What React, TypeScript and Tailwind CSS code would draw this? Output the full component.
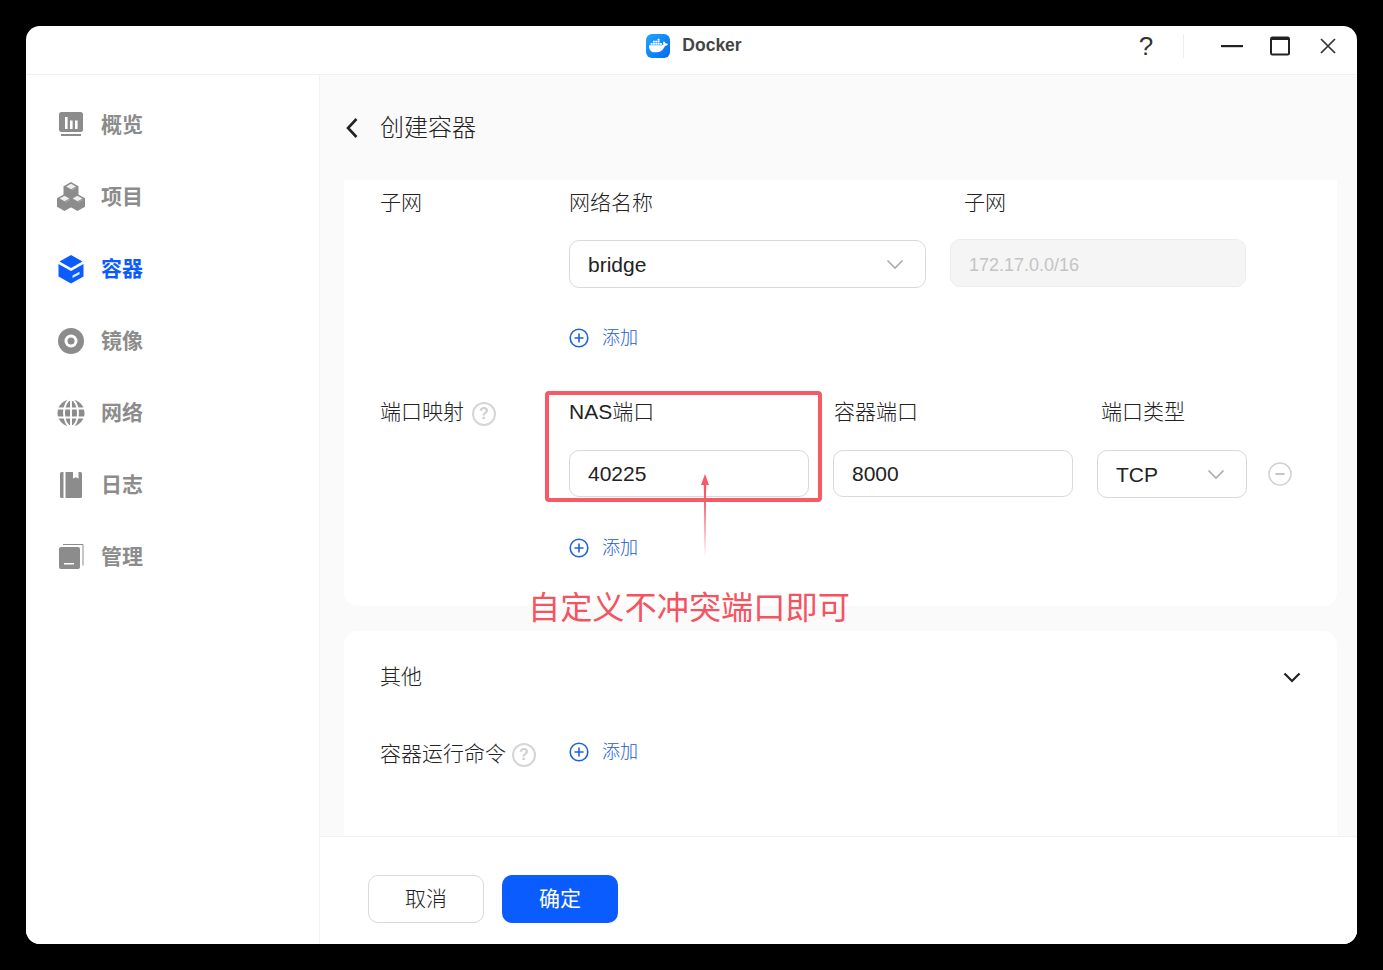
import React from "react";
import { SiDocker } from "react-icons/si";

const FONT = "[font-family:'Liberation_Sans','Noto_Sans_CJK_SC',sans-serif]";

function Overview() {
  return (
    <svg width="28" height="28" viewBox="0 0 28 28">
      <rect x="2" y="1" width="24" height="20" rx="2.500" fill="#8c8c8c" />
      <rect x="8" y="6" width="2.600" height="12" fill="#fff" />
      <rect x="13" y="9.500" width="2.600" height="8.500" fill="#fff" />
      <rect x="18" y="9.500" width="2.600" height="8.500" fill="#fff" />
      <rect x="4" y="23" width="20" height="2" fill="#8c8c8c" />
    </svg>
  );
}
function Cube({ x, y }: { x: number; y: number }) {
  return (
    <g transform={`translate(${x} ${y})`}>
      <path d="M7.500 0L15 4.200v8.600L7.500 17 0 12.800V4.200z" fill="#8c8c8c" />
      <path d="M2.600 4.500L7.500 1.800l4.900 2.700-4.900 2.700z" fill="#fff" opacity="0.85" />
      <path d="M8 8.200l4.800-2.600" stroke="#fff" strokeWidth="0.600" opacity="0.5" />
    </g>
  );
}
function Cubes() {
  return (
    <svg width="28" height="30" viewBox="0 0 28 30">
      <Cube x={6.500} y={0} />
      <Cube x={0} y={12} />
      <Cube x={13} y={12} />
    </svg>
  );
}
function Box() {
  return (
    <svg width="28" height="30" viewBox="0 0 28 30">
      <path d="M14 1l11.500 6.500L14 14 2.500 7.500z" fill="#0a5cff" />
      <path d="M1.500 10L14 17l12.500-7v12.500L14 29.500 1.500 22.500z" fill="#0a5cff" />
      <path d="M15.500 24l7-3.800v-2.400l-7 3.800z" fill="#fff" opacity="0.9" />
    </svg>
  );
}
function Disc() {
  return (
    <svg width="28" height="28" viewBox="0 0 28 28">
      <circle cx="14" cy="14" r="13" fill="#8c8c8c" />
      <circle cx="14" cy="14" r="6.500" fill="#fff" />
      <circle cx="14" cy="14" r="3.500" fill="#8c8c8c" />
    </svg>
  );
}
function Globe() {
  return (
    <svg width="28" height="28" viewBox="0 0 28 28">
      <circle cx="14" cy="14" r="13.500" fill="#8c8c8c" />
      <g fill="none" stroke="#fff" strokeWidth="1.900">
        <ellipse cx="14" cy="14" rx="7" ry="13.500" />
        <path d="M1 9.500h26M1 18.500h26M14 0v28" />
      </g>
    </svg>
  );
}
function Book() {
  return (
    <svg width="28" height="28" viewBox="0 0 28 28">
      <rect x="3" y="1" width="22" height="26" rx="1.500" fill="#8c8c8c" />
      <rect x="6.500" y="1" width="2" height="26" fill="#fff" />
      <path d="M16 1h5.500v6.500l-2.750-1.300L16 7.500z" fill="#fff" />
    </svg>
  );
}
function Manage() {
  return (
    <svg width="28" height="28" viewBox="0 0 28 28">
      <rect x="2" y="4" width="21" height="22" rx="2" fill="#8c8c8c" />
      <rect x="7" y="20" width="10" height="1.500" fill="#fff" />
      <path d="M6 1.500h20v21" fill="none" stroke="#8c8c8c" strokeWidth="1" />
    </svg>
  );
}

const NAV: { label: string; icon: React.ReactNode; active?: boolean }[] = [
  { label: "概览", icon: <Overview /> },
  { label: "项目", icon: <Cubes /> },
  { label: "容器", icon: <Box />, active: true },
  { label: "镜像", icon: <Disc /> },
  { label: "网络", icon: <Globe /> },
  { label: "日志", icon: <Book /> },
  { label: "管理", icon: <Manage /> },
];

function Chevron({ color = "#ababab", sw = 1.6 }: { color?: string; sw?: number }) {
  return (
    <svg width="18" height="11" viewBox="0 0 18 11">
      <path d="M1.500 1.500L9 9l7.500-7.500" fill="none" stroke={color} strokeWidth={sw} />
    </svg>
  );
}

function Help() {
  return (
    <span className="flex h-6 w-6 shrink-0 items-center justify-center rounded-full border-2 border-[#d6d6d6] text-[16px] font-bold leading-none text-[#cfcfcf]">
      ?
    </span>
  );
}

function Add() {
  return (
    <div className="flex h-6 items-center gap-[13px] text-[18px] text-[#2a6ad9]">
      <svg width="20" height="20" viewBox="0 0 20 20">
        <circle cx="10" cy="10" r="8.800" fill="none" stroke="#1f62d9" strokeWidth="1.600" />
        <path d="M10 5.500v9M5.500 10h9" stroke="#1f62d9" strokeWidth="1.600" />
      </svg>
      <span className="font-light text-[#1a5ad2]">添加</span>
    </div>
  );
}

function Label({ children, className = "" }: { children: React.ReactNode; className?: string }) {
  return <div className={`h-[30px] text-[21px] font-light leading-[30px] text-[#222] ${className}`}>{children}</div>;
}

function Field({ children, className = "" }: { children: React.ReactNode; className?: string }) {
  return (
    <div className={`flex items-center justify-between rounded-[10px] border border-[#d9d9d9] bg-white pl-[18px] pt-px text-[21px] text-[#222] ${className}`}>
      {children}
    </div>
  );
}

export default function App() {
  return (
    <div className={`h-[970px] w-[1383px] overflow-hidden bg-black pl-[26px] pt-[26px] ${FONT}`}>
      <div className="relative flex h-[918px] w-[1331px] flex-col overflow-hidden rounded-[14px] bg-white">
        <header className="grid h-[49px] shrink-0 grid-cols-[1fr_auto_1fr] items-center border-b border-[#f0f0f0] pb-[9px]">
          <div />
          <div className="ml-[5px] flex items-center gap-3">
            <div className="flex h-6 w-6 items-center justify-center rounded-[6px] bg-gradient-to-br from-[#22a6ff] to-[#0a68ef]">
              <SiDocker size={19} color="#fff" />
            </div>
            <span className="text-[17.5px] font-bold text-[#444]">Docker</span>
          </div>
          <div className="flex items-center justify-end">
            <span className="w-[18px] text-center text-[26px] leading-none text-[#333]">?</span>
            <div className="ml-[28px] h-6 w-px bg-[#eeeeee]" />
            <svg className="ml-[37px]" width="22" height="4" viewBox="0 0 22 4">
              <rect y="1" width="22" height="2.200" fill="#222" />
            </svg>
            <svg className="ml-[27px]" width="20" height="20" viewBox="0 0 20 20">
              <rect x="1" y="1.500" width="18" height="17" rx="1.500" fill="none" stroke="#222" strokeWidth="2" />
              <rect x="1" y="1" width="18" height="3" fill="#222" />
            </svg>
            <svg className="ml-[30px] mr-[21px]" width="16" height="16" viewBox="0 0 16 16">
              <path d="M1 1l14 14M15 1L1 15" stroke="#333" strokeWidth="1.700" />
            </svg>
          </div>
        </header>

        <div className="flex min-h-0 flex-1">
          <aside className="w-[294px] shrink-0 border-r border-[#f2f2f2] bg-white pt-[14px]">
            {NAV.map((n) => (
              <div key={n.label} className="flex h-[72px] items-center gap-4 pl-[31px]">
                <div className="flex h-[30px] w-[28px] items-center justify-center">{n.icon}</div>
                <span className={`text-[21px] font-bold ${n.active ? "text-[#0a5cff]" : "text-[#8c8c8c]"}`}>{n.label}</span>
              </div>
            ))}
          </aside>

          <main className="flex min-w-0 flex-1 flex-col bg-[#fafafa]">
            <div className="flex h-[105px] shrink-0 items-center gap-[22px] pl-[26px]">
              <svg width="12" height="20" viewBox="0 0 12 20">
                <path d="M10.500 1L2 10l8.500 9" fill="none" stroke="#222" strokeWidth="2.600" />
              </svg>
              <h1 className="text-[24px] font-light text-[#222]">创建容器</h1>
            </div>

            <div className="min-h-0 flex-1 overflow-hidden pl-6 pr-5">
              <section className="h-[426px] rounded-b-[14px] bg-white pl-9 pt-2">
                <div className="flex">
                  <Label className="w-[189px]">子网</Label>
                  <div>
                    <div className="flex">
                      <Label className="w-[395px]">网络名称</Label>
                      <Label>子网</Label>
                    </div>
                    <div className="mt-[22px] flex items-start gap-6">
                      <Field className="h-12 w-[357px] pr-[21px]">
                        <span>bridge</span>
                        <Chevron />
                      </Field>
                      <div className="-mt-px flex h-12 w-[296px] items-center rounded-[10px] border border-[#ececec] bg-[#f5f5f5] pl-[18px] pt-[5px] text-[18px] text-[#c4c4c4]">
                        172.17.0.0/16
                      </div>
                    </div>
                    <div className="mt-[38px]">
                      <Add />
                    </div>
                  </div>
                </div>

                <div className="mt-[47px] flex">
                  <div className="flex w-[189px] items-start gap-2">
                    <Label>端口映射</Label>
                    <div className="mt-[5px]">
                      <Help />
                    </div>
                  </div>
                  <div>
                    <div className="flex">
                      <Label className="w-[265px]">NAS端口</Label>
                      <Label className="w-[267px]">容器端口</Label>
                      <Label>端口类型</Label>
                    </div>
                    <div className="mt-[23px] flex items-start">
                      <Field className="h-[47px] w-[240px]">
                        <span>40225</span>
                      </Field>
                      <Field className="ml-6 h-[47px] w-[240px]">
                        <span>8000</span>
                      </Field>
                      <Field className="ml-6 h-12 w-[150px] pr-[21px]">
                        <span>TCP</span>
                        <Chevron />
                      </Field>
                      <svg className="ml-[21px] mt-3" width="24" height="24" viewBox="0 0 24 24">
                        <circle cx="12" cy="12" r="11" fill="none" stroke="#d2d2d2" strokeWidth="1.500" />
                        <path d="M7.500 12h9" stroke="#c4c4c4" strokeWidth="2" />
                      </svg>
                    </div>
                    <div className="mt-[38px]">
                      <Add />
                    </div>
                  </div>
                </div>
              </section>

              <section className="mt-[25px] h-[260px] rounded-t-[14px] bg-white pl-9 pr-[36px] pt-[31px]">
                <div className="flex items-center justify-between">
                  <Label>其他</Label>
                  <Chevron color="#222" sw={2.200} />
                </div>
                <div className="mt-[47px] flex items-start">
                  <div className="flex w-[189px] items-start gap-[6px]">
                    <Label>容器运行命令</Label>
                    <div className="mt-[4px]">
                      <Help />
                    </div>
                  </div>
                  <div className="mt-px">
                    <Add />
                  </div>
                </div>
              </section>
            </div>

            <footer className="flex h-[108px] shrink-0 items-start gap-[18px] border-t border-[#f0f0f0] bg-white pl-12 pt-[38px]">
              <button className="h-12 w-[116px] rounded-[10px] border border-[#d9d9d9] bg-white text-[21px] font-light text-[#222]">取消</button>
              <button className="h-12 w-[116px] rounded-[10px] bg-[#0a5cff] text-[21px] text-white">确定</button>
            </footer>
          </main>
        </div>

        <div className="absolute left-[519px] top-[365px] h-[111px] w-[277px] rounded-[4px] border-4 border-[#f65a67]" />
        <svg className="absolute left-[672px] top-[447px]" width="14" height="84" viewBox="0 0 14 84">
          <path d="M7 1L11 12H8.200L7 84 5.800 12H3z" fill="#f65a67" />
        </svg>
        <div className="absolute left-[502px] top-[559px] text-[32.2px] leading-[46px] text-[#f4535f]">自定义不冲突端口即可</div>
      </div>
    </div>
  );
}
